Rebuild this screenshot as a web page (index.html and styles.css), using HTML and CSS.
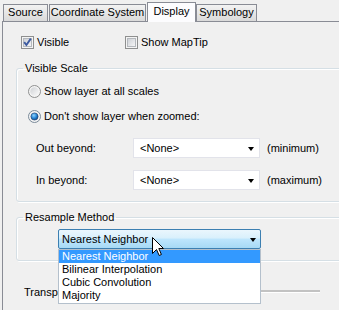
FILE: index.html
```html
<!DOCTYPE html>
<html>
<head>
<meta charset="utf-8">
<link rel="stylesheet" href="styles.css">
</head>
<body>
<div class="tabs">
  <div class="tab tab-source">Source</div>
  <div class="tab tab-coord">Coordinate System</div>
  <div class="tab tab-display active">Display</div>
  <div class="tab tab-symb">Symbology</div>
</div>
<div class="panel">
  <div class="checks">
    <label class="check">
      <svg class="box" width="13" height="13" viewBox="0 0 13 13">
        <defs><linearGradient id="cb1" x1="0" y1="0" x2="1" y2="1"><stop offset="0" stop-color="#cbcfd5"/><stop offset="1" stop-color="#f7f7f7"/></linearGradient></defs>
        <rect x="0.5" y="0.5" width="12" height="12" fill="#f4f4f4" stroke="#8e8f8f"/>
        <rect x="2.5" y="2.5" width="8" height="8" fill="url(#cb1)" stroke="#b4b8bd"/>
        <path d="M3.2 6.2 L5.4 9 L9.8 2.6" fill="none" stroke="#3c5aa0" stroke-width="1.9"/>
      </svg>
      <span>Visible</span>
    </label>
    <label class="check">
      <svg class="box" width="13" height="13" viewBox="0 0 13 13">
        <defs><linearGradient id="cb2" x1="0" y1="0" x2="1" y2="1"><stop offset="0" stop-color="#cbcfd5"/><stop offset="1" stop-color="#f7f7f7"/></linearGradient></defs>
        <rect x="0.5" y="0.5" width="12" height="12" fill="#f4f4f4" stroke="#8e8f8f"/>
        <rect x="2.5" y="2.5" width="8" height="8" fill="url(#cb2)" stroke="#b4b8bd"/>
      </svg>
      <span>Show MapTip</span>
    </label>
  </div>

  <fieldset class="group scale">
    <legend>Visible Scale</legend>
    <div class="radio-row first">
      <svg class="radio" width="13" height="13" viewBox="0 0 13 13">
        <defs><linearGradient id="rg1" x1="0" y1="0" x2="1" y2="1"><stop offset="0" stop-color="#cfd2d6"/><stop offset="1" stop-color="#fafafa"/></linearGradient></defs>
        <circle cx="6.5" cy="6.5" r="6" fill="#f4f4f4" stroke="#8e8f8f"/>
        <circle cx="6.5" cy="6.5" r="4.2" fill="url(#rg1)"/>
      </svg>
      <span>Show layer at all scales</span>
    </div>
    <div class="radio-row">
      <svg class="radio" width="13" height="13" viewBox="0 0 13 13">
        <defs><radialGradient id="rg2" cx="0.4" cy="0.35" r="0.7"><stop offset="0" stop-color="#8fd3ff"/><stop offset="0.6" stop-color="#1f7fd0"/><stop offset="1" stop-color="#17447e"/></radialGradient></defs>
        <circle cx="6.5" cy="6.5" r="6" fill="#f4f4f4" stroke="#7a8a99"/>
        <circle cx="6.5" cy="6.5" r="3.6" fill="url(#rg2)" stroke="#1d3d6c" stroke-width="0.6"/>
      </svg>
      <span>Don't show layer when zoomed:</span>
    </div>
    <div class="scale-row first">
      <span class="scale-label">Out beyond:</span>
      <div class="combo"><span>&lt;None&gt;</span><span class="arrow"></span></div>
      <span class="hint">(minimum)</span>
    </div>
    <div class="scale-row">
      <span class="scale-label">In beyond:</span>
      <div class="combo"><span>&lt;None&gt;</span><span class="arrow"></span></div>
      <span class="hint">(maximum)</span>
    </div>
  </fieldset>

  <fieldset class="group resample">
    <legend>Resample Method</legend>
    <div class="combo-wrap">
      <div class="combo focused"><span>Nearest Neighbor</span><span class="arrow"></span></div>
      <ul class="dropdown">
        <li class="selected">Nearest Neighbor</li>
        <li>Bilinear Interpolation</li>
        <li>Cubic Convolution</li>
        <li>Majority</li>
      </ul>
      <svg class="cursor" width="13" height="20" viewBox="0 0 13 20">
        <path d="M0.5 0.5 L0.5 16.5 L4.5 12.5 L7.2 18.5 L9.4 17.5 L6.8 11.5 L11.5 11.5 Z" fill="#fff" stroke="#000" stroke-width="1" stroke-linejoin="miter"/>
      </svg>
    </div>
  </fieldset>

  <div class="transp">
    <span class="transp-label">Transparency:</span>
    <span class="track"></span>
  </div>
</div>
</body>
</html>
```

FILE: styles.css
```css
* { box-sizing: border-box; }

html, body {
  margin: 0;
  padding: 0;
}

body {
  width: 339px;
  height: 310px;
  overflow: hidden;
  background: #f0f0f0;
  font-family: "Liberation Sans", Arial, sans-serif;
  font-size: 11px;
  color: #000;
}

.tabs {
  display: flex;
  align-items: flex-end;
  height: 21px;
  padding-left: 3px;
}

.tab {
  height: 17px;
  line-height: 15px;
  text-align: center;
  border: 1px solid #898c95;
  border-bottom: none;
  background: linear-gradient(#f3f3f3, #e6e6e6 50%, #dadada);
  margin-right: 1px;
  white-space: nowrap;
}

.tab-source { width: 45px; }
.tab-coord { width: 97px; }
.tab-display { width: 49px; }
.tab-symb { width: 61px; }

.tab.active {
  height: 20px;
  line-height: 17px;
  margin-bottom: -1px;
  background: #fcfcfe;
  position: relative;
  z-index: 1;
  margin-right: 0;
}

.panel {
  margin-left: 2px;
  width: 337px;
  height: 289px;
  overflow: hidden;
  border: 1px solid #898c95;
  border-right: none;
  border-bottom: none;
  background: #f0f0f0;
}

.checks {
  display: grid;
  grid-template-columns: 104px auto;
  margin-top: 14px;
  padding-left: 18px;
  height: 13px;
}

.check {
  display: flex;
  align-items: center;
  gap: 3px;
  height: 13px;
  line-height: 13px;
}

.box, .radio {
  flex: none;
  display: block;
}

.group {
  margin: 13px 0 0 13px;
  width: 340px;
  min-width: 0;
  padding: 0 0 11px 0;
  border: 1px solid #d5dfe5;
  border-radius: 3px;
  box-shadow: inset 1px 1px 0 #fff, 1px 1px 0 #fff;
}

.group legend {
  margin-left: 6px;
  padding: 0 2px;
  line-height: 13px;
  height: 13px;
}

.resample {
  margin-top: 9px;
}

.radio-row {
  display: flex;
  align-items: center;
  gap: 3px;
  height: 13px;
  line-height: 13px;
  margin-top: 12px;
  padding-left: 11px;
}

.radio-row.first { margin-top: 10px; }

.scale-row {
  display: flex;
  align-items: center;
  height: 20px;
  margin-top: 12px;
  padding-left: 19px;
}

.scale-row.first { margin-top: 15px; }

.scale-label {
  width: 97px;
}

.combo {
  position: relative;
  width: 127px;
  height: 20px;
  border: 1px solid #e2e3ea;
  background: #fff;
  display: flex;
  align-items: center;
  justify-content: space-between;
  padding: 0 5px 0 6px;
  line-height: 13px;
}

.arrow {
  width: 0;
  height: 0;
  border-left: 3.5px solid transparent;
  border-right: 3.5px solid transparent;
  border-top: 4px solid #000;
  margin-top: 1px;
}

.hint {
  margin-left: 7px;
}

.combo-wrap {
  position: relative;
  margin: 5px 0 0 41px;
  width: 203px;
  height: 20px;
}

.combo.focused {
  width: 203px;
  border: 1px solid #3c7fb1;
  border-radius: 2px;
  padding: 0 4px 0 3px;
  background: linear-gradient(#eaf6fd 0%, #d9f0fc 45%, #bee6fd 50%, #a7d9f5 100%);
}

.dropdown {
  position: absolute;
  top: 20px;
  left: 0;
  width: 203px;
  height: 55px;
  margin: 0;
  padding: 0;
  list-style: none;
  background: #fff;
  border: 1px solid #b4c0cc;
  z-index: 2;
}

.dropdown li {
  height: 13px;
  line-height: 13px;
  padding-left: 3px;
  white-space: nowrap;
}

.dropdown li.selected {
  background: #3399ff;
  color: #fff;
}

.cursor {
  position: absolute;
  left: 94px;
  top: 8px;
  z-index: 3;
}

.transp {
  display: flex;
  align-items: center;
  margin-top: 24px;
  padding-left: 21px;
  height: 13px;
}

.transp-label {
  width: 86px;
  flex: none;
}

.track {
  flex: none;
  width: 210px;
  height: 3px;
  border-top: 2px solid #c2c2c2;
  border-bottom: 1px solid #fff;
}
```
